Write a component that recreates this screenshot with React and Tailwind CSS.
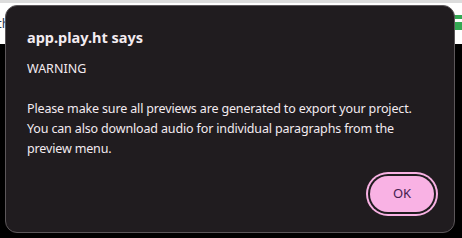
export default function App() {
  return (
    <div className="relative w-[462px] h-[238px] overflow-hidden bg-black" style={{ fontFamily: '"Noto Sans", "Open Sans", sans-serif' }}>
      <div className="h-[44px] bg-white border-t-[3px] border-[#dcdcdc] flex justify-between items-start">
        <span className="ml-[-3px] mt-[12px] text-[13px] leading-[16px] text-[#2a3a55]">th</span>
        <div className="flex flex-col gap-[3px] mt-[12px]">
          <div className="w-[8px] h-[4px] bg-[#34a853]" />
          <div className="w-[8px] h-[8px] bg-[#34a853]" />
        </div>
      </div>

      <div className="absolute left-[5px] top-[5px] w-[450px] h-[228px] rounded-[12px] border border-[#5c575a] bg-[#201c1f] flex flex-col pl-[21px] pr-[16px] pt-[21px] pb-[18px] text-[#f3ebf0]">
        <div className="text-[14.5px] font-bold leading-[20px]">app.play.ht says</div>
        <div className="mt-[12px] text-[12.5px] leading-[20px]">WARNING</div>
        <div className="mt-[20px] text-[12.5px] tracking-[-0.15px] leading-[20px]">
          Please make sure all previews are generated to export your project.
          <br />
          You can also download audio for individual paragraphs from the
          <br />
          preview menu.
        </div>
        <div className="mt-auto flex justify-end">
          <button className="w-[64px] h-[36px] rounded-full bg-[#f9b2e4] text-[#45204f] text-[13px] ring-2 ring-[#f9b2e4] ring-offset-2 ring-offset-[#201c1f] mr-[4px] mb-[2px]">
            OK
          </button>
        </div>
      </div>
    </div>
  );
}
